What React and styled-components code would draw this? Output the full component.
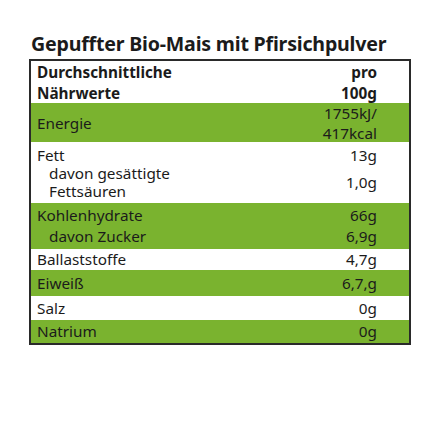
import React from "react";
import styled, { createGlobalStyle } from "styled-components";

const rows = [
  {
    green: true,
    h: 39,
    lh: 20,
    lines: [{ label: "Energie", value: ["1755kJ/", "417kcal"] }],
  },
  {
    h: 61,
    lh: 18,
    lines: [
      { label: "Fett", value: ["13g"] },
      { label: ["davon gesättigte", "Fettsäuren"], value: ["1,0g"], indent: true },
    ],
  },
  {
    green: true,
    h: 46,
    lh: 21,
    lines: [
      { label: "Kohlenhydrate", value: ["66g"] },
      { label: "davon Zucker", value: ["6,9g"], indent: true },
    ],
  },
  { h: 21, lh: 21, lines: [{ label: "Ballaststoffe", value: ["4,7g"] }] },
  { green: true, h: 26, lh: 21, lines: [{ label: "Eiweiß", value: ["6,7,g"] }] },
  { h: 24, lh: 21, lines: [{ label: "Salz", value: ["0g"] }] },
  { green: true, h: 23, lh: 21, lines: [{ label: "Natrium", value: ["0g"] }] },
];

const withBreaks = (parts) =>
  [].concat(parts).map((p, i) => (
    <React.Fragment key={i}>
      {i > 0 && <br />}
      {p}
    </React.Fragment>
  ));

export default function App() {
  return (
    <>
      <GlobalStyle />
      <Page>
        <Title>Gepuffter Bio-Mais mit Pfirsichpulver</Title>
        <Table>
          <HeaderRow>
            <span>
              Durchschnittliche
              <br />
              Nährwerte
            </span>
            <HeaderValue>
              pro
              <br />
              100g
            </HeaderValue>
          </HeaderRow>
          {rows.map((row, i) => (
            <Group key={i} $green={row.green} $h={row.h} $lh={row.lh}>
              {row.lines.map((line, j) => (
                <Line key={j}>
                  <Label $indent={line.indent}>{withBreaks(line.label)}</Label>
                  <Value>{withBreaks(line.value)}</Value>
                </Line>
              ))}
            </Group>
          ))}
        </Table>
      </Page>
    </>
  );
}

const GlobalStyle = createGlobalStyle`
  body {
    margin: 0;
    background: #ffffff;
    font-family: "Noto Sans", "Open Sans", sans-serif;
    color: #1b1b1b;
  }
`;

const Page = styled.div`
  width: 440px;
  padding: 32px 29px 0 29px;
  box-sizing: border-box;
`;

const Title = styled.h1`
  margin: 0 0 3px 2px;
  font-size: 19.6px;
  line-height: 24px;
  font-weight: 700;
  letter-spacing: -0.2px;
  color: #1b1b1b;
  white-space: nowrap;
`;

const Table = styled.div`
  width: 382px;
  box-sizing: border-box;
  border: 2px solid #2a2a2a;
  display: flex;
  flex-direction: column;
`;

const HeaderRow = styled.div`
  display: flex;
  justify-content: space-between;
  height: 41px;
  padding: 1px 32px 0 6px;
  font-size: 15.3px;
  line-height: 21px;
  font-weight: 700;
`;

const HeaderValue = styled.span`
  text-align: right;
`;

const Group = styled.div`
  background: ${(p) => (p.$green ? "#7ab32f" : "#ffffff")};
  height: ${(p) => p.$h}px;
  display: flex;
  flex-direction: column;
  justify-content: center;
  padding: 0 32px 0 6px;
  font-size: 15.3px;
  line-height: ${(p) => p.$lh}px;
`;

const Line = styled.div`
  display: flex;
  justify-content: space-between;
  align-items: center;
`;

const Label = styled.span`
  padding-left: ${(p) => (p.$indent ? "12px" : "0")};
`;

const Value = styled.span`
  text-align: right;
`;
